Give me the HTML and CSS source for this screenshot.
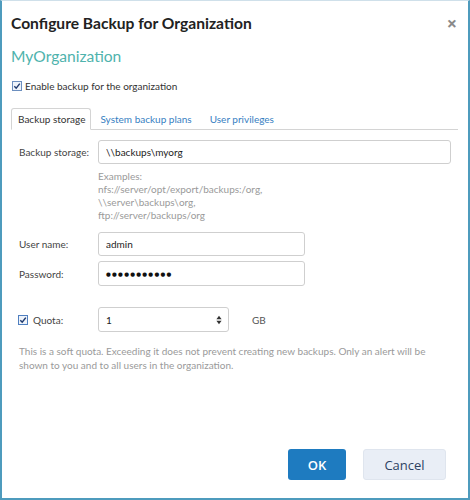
FILE: index.html
```html
<!DOCTYPE html>
<html>
<head>
<meta charset="utf-8">
<link rel="stylesheet" href="styles.css">
</head>
<body>
<div class="dialog">
  <div class="header">
    <h1 class="title">Configure Backup for Organization</h1>
    <span class="close">×</span>
  </div>
  <div class="org">MyOrganization</div>
  <label class="check-row">
    <span class="cb"><svg viewBox="0 0 10 10" width="10" height="10"><rect x="0.5" y="0.5" width="9" height="9" fill="#eef3fa" stroke="#6c8fbf"/><path d="M2.3 5.2 L4.2 7.2 L7.8 2.6" fill="none" stroke="#1f3a6e" stroke-width="1.4"/></svg></span>
    <span>Enable backup for the organization</span>
  </label>
  <div class="tabs">
    <span class="tab active">Backup storage</span>
    <span class="tab">System backup plans</span>
    <span class="tab">User privileges</span>
  </div>
  <div class="form">
    <div class="row">
      <span class="label">Backup storage:</span>
      <input class="field wide" type="text" value="\\backups\myorg">
    </div>
    <div class="examples">
      Examples:<br>
      nfs://server/opt/export/backups:/org,<br>
      \\server\backups\org,<br>
      ftp://server/backups/org
    </div>
    <div class="row user">
      <span class="label">User name:</span>
      <input class="field mid" type="text" value="admin">
    </div>
    <div class="row pass">
      <span class="label">Password:</span>
      <div class="field mid dots"><span>●●●●●●●●●●●</span></div>
    </div>
    <div class="row quota">
      <span class="label qlabel">
        <span class="cb"><svg viewBox="0 0 10 10" width="10" height="10"><rect x="0.5" y="0.5" width="9" height="9" fill="#eef3fa" stroke="#4f7fc0"/><path d="M2.3 5.2 L4.2 7.2 L7.8 2.6" fill="none" stroke="#1f3a6e" stroke-width="1.5"/></svg></span>
        Quota:
      </span>
      <div class="field small"><span>1</span><svg class="spin" viewBox="0 0 6 10" width="6" height="10"><path d="M3 0.8 L5.6 4.2 L0.4 4.2 Z M3 9.2 L5.6 5.8 L0.4 5.8 Z" fill="#333"/></svg></div>
      <span class="unit">GB</span>
    </div>
    <p class="note">This is a soft quota. Exceeding it does not prevent creating new backups. Only an alert will be shown to you and to all users in the organization.</p>
  </div>
  <div class="footer">
    <button class="btn ok">OK</button>
    <button class="btn cancel">Cancel</button>
  </div>
</div>
</body>
</html>
```

FILE: styles.css
```css
html, body {
  margin: 0;
  padding: 0;
  background: #fff;
}
.dialog {
  width: 470px;
  height: 500px;
  box-sizing: border-box;
  border-left: 2px solid #4e9bbd;
  border-right: 2px solid #4e9bbd;
  border-bottom: 2px solid #4e9bbd;
  border-top: 1px solid #cfe0ea;
  display: flex;
  flex-direction: column;
  padding: 0 10px 0 9px;
  font-family: "Lato", "Open Sans", sans-serif;
  color: #333;
}
.header {
  height: 43px;
  display: flex;
  align-items: center;
  justify-content: space-between;
}
.title {
  margin: 0;
  font-size: 15.6px;
  font-weight: 700;
  color: #222;
}
.close {
  font-family: "Open Sans", sans-serif;
  font-size: 18px;
  font-weight: 700;
  color: #8a8a8a;
  margin-right: 1px;
}
.org {
  height: 24px;
  line-height: 24px;
  font-size: 15.6px;
  color: #4fb3ad;
}
.check-row {
  margin-top: 11px;
  height: 14px;
  display: flex;
  align-items: center;
  gap: 3px;
  font-size: 10px;
  color: #333;
  padding-left: 1px;
}
.cb {
  display: inline-flex;
}
.tabs {
  margin-top: 15px;
  display: flex;
  align-items: flex-end;
  height: 21px;
  border-bottom: 1px solid #d4d4d4;
  font-size: 10px;
}
.tab {
  height: 21px;
  line-height: 21px;
  padding: 0 8px;
  color: #3680c2;
  box-sizing: border-box;
  border: 1px solid transparent;
}
.tab.active {
  color: #333;
  border: 1px solid #d4d4d4;
  border-bottom: 1px solid #fff;
  border-radius: 3px 3px 0 0;
  background: #fff;
  margin-bottom: -1px;
  height: 22px;
  padding: 0 5px 0 6px;
}
.form {
  padding-left: 8px;
  padding-top: 10px;
  font-size: 10px;
}
.row {
  display: flex;
  align-items: center;
}
.label {
  width: 79px;
  flex: none;
  color: #444;
}
.field {
  height: 24px;
  box-sizing: border-box;
  border: 1px solid #cfcfcf;
  border-radius: 3px;
  padding: 0 7px;
  font-family: inherit;
  font-size: 10px;
  color: #222;
  outline: none;
  background: #fff;
}
.wide {
  width: 353px;
}
.mid {
  width: 207px;
}
.dots {
  display: flex;
  align-items: center;
  font-family: "DejaVu Sans", sans-serif;
  font-size: 5.5px;
  letter-spacing: 1.25px;
  color: #111;
}
.examples {
  margin: 6px 0 0 79px;
  line-height: 13px;
  color: #9a9a9a;
}
.row.user {
  margin-top: 10px;
}
.row.pass {
  margin-top: 5px;
}
.row.pass .field {
  height: 25px;
}
.row.quota {
  margin-top: 21px;
}
.qlabel {
  display: flex;
  align-items: center;
  gap: 5px;
  margin-left: -1px;
  width: 80px;
}
.small {
  width: 131px;
  height: 25px;
  display: flex;
  align-items: center;
  justify-content: space-between;
  padding-right: 6px;
}
.unit {
  margin-left: 23px;
  color: #555;
}
.note {
  margin: 12px 0 0 0;
  line-height: 14px;
  color: #9a9a9a;
  padding-right: 12px;
}
.footer {
  margin-top: auto;
  display: flex;
  justify-content: flex-end;
  gap: 17px;
  padding: 0 12px 18px 0;
}
.btn {
  height: 31px;
  border-radius: 3px;
  font-family: "Open Sans", sans-serif;
  font-size: 13px;
  border: 1px solid transparent;
  cursor: pointer;
}
.ok {
  width: 58px;
  background: #1e7bc0;
  color: #fff;
  font-weight: 600;
}
.cancel {
  width: 83px;
  background: #e9eef6;
  border-color: #dfe5ee;
  color: #2d4263;
}
```
